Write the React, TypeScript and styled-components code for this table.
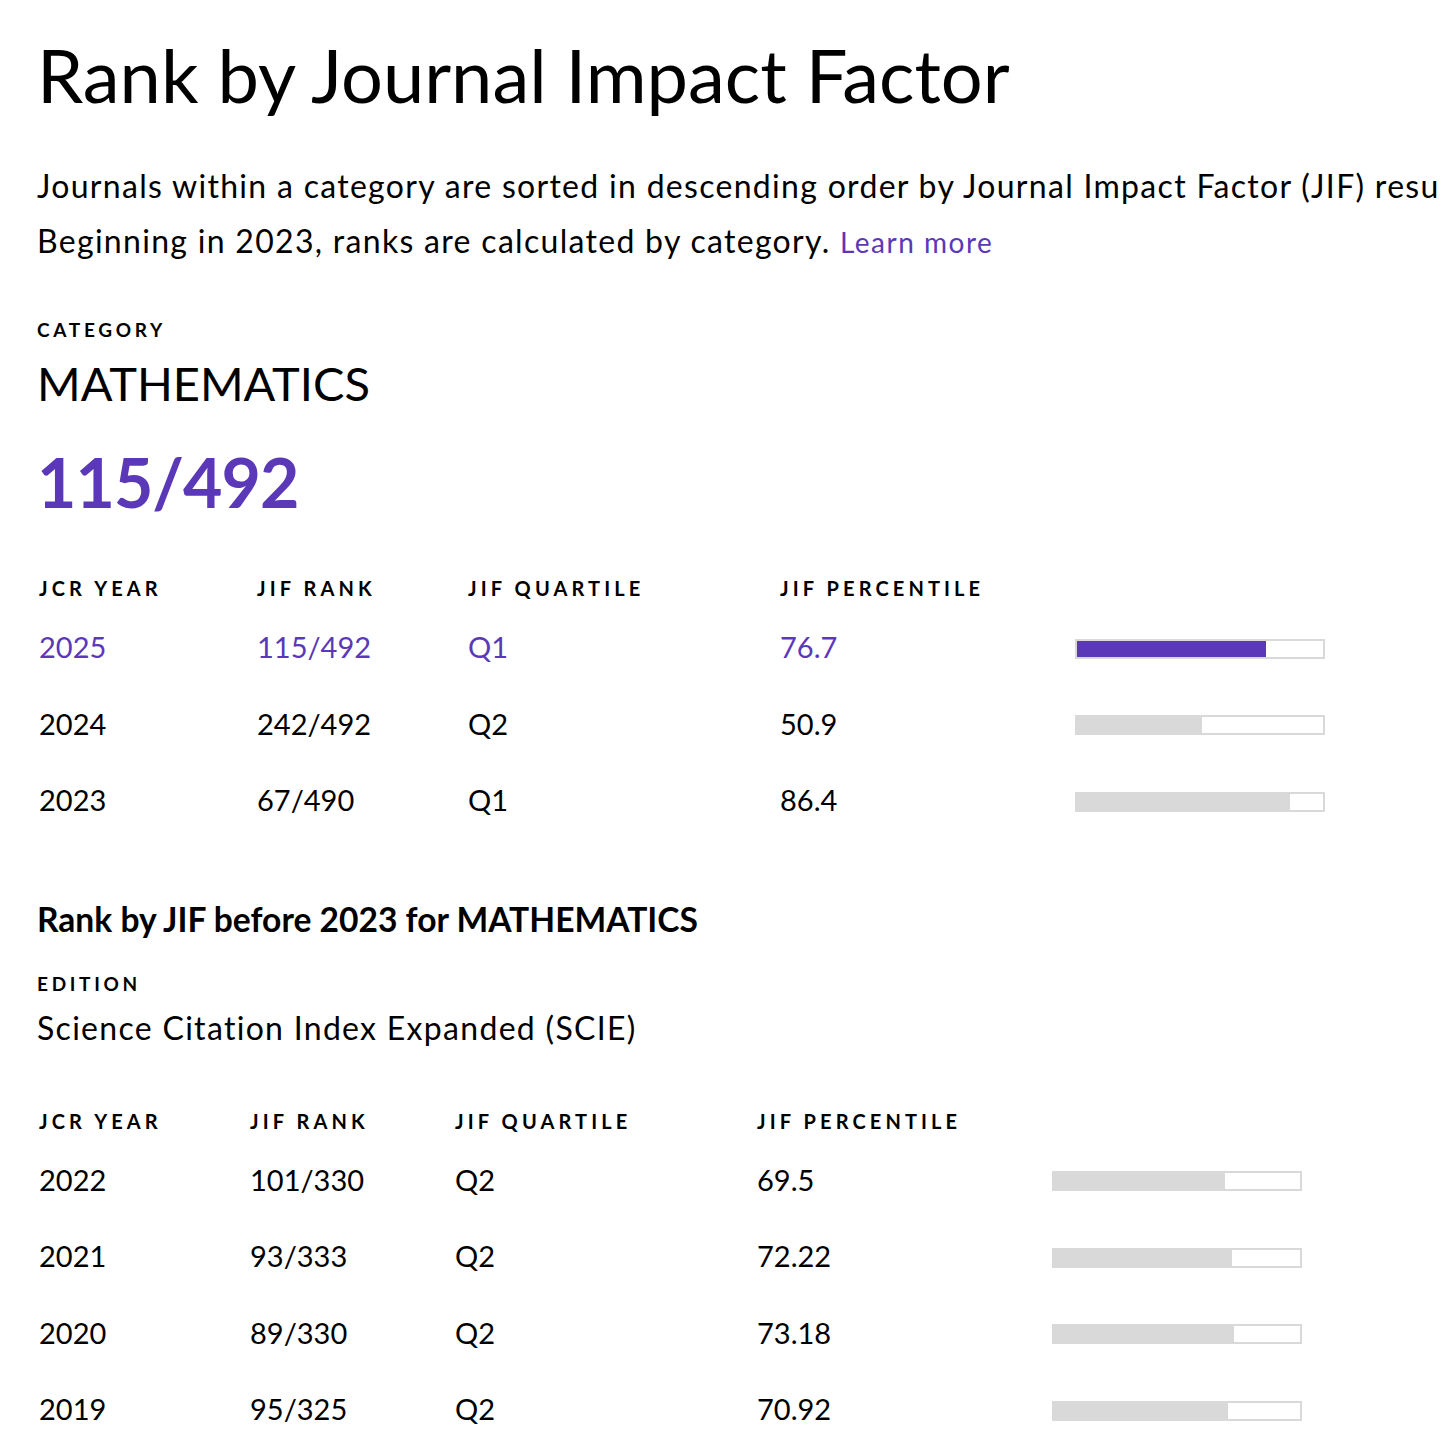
import styled, { createGlobalStyle } from "styled-components";

const GlobalStyle = createGlobalStyle`
  html, body {
    margin: 0;
    padding: 0;
    background: #ffffff;
    overflow-x: hidden;
  }
  body {
    font-family: Lato, "Liberation Sans", sans-serif;
    color: #000000;
  }
`;

const purple = "#5a38b8";
const grey = "#d9d9d9";

const Page = styled.div`
  padding: 35px 0 0 37px;
  overflow: hidden;
`;

const Title = styled.h1`
  margin: 0;
  font-size: 74px;
  line-height: 80px;
  font-weight: 400;
  white-space: nowrap;
`;

const Intro = styled.div`
  margin-top: 43px;
  font-size: 32px;
  line-height: 55px;
  letter-spacing: 1.3px;
`;

const IntroLine = styled.div`
  white-space: nowrap;
`;

const LearnMore = styled.a`
  color: ${purple};
  font-size: 28px;
  letter-spacing: 1.5px;
  text-decoration: none;
`;

const Label = styled.div<{ $top: number }>`
  margin-top: ${({ $top }) => $top}px;
  font-size: 19px;
  line-height: 24px;
  font-weight: 700;
  letter-spacing: 3.7px;
  text-transform: uppercase;
`;

const Category = styled.div`
  margin-top: 13px;
  font-size: 47px;
  line-height: 56px;
`;

const BigRank = styled.div`
  margin-top: 33px;
  font-size: 68px;
  line-height: 76px;
  font-weight: 700;
  letter-spacing: -1px;
  color: ${purple};
`;

const Table = styled.div<{ $top: number; $cols: string }>`
  margin-top: ${({ $top }) => $top}px;
  padding-left: 2px;
  display: grid;
  grid-template-columns: ${({ $cols }) => $cols};
`;

const HeadCell = styled.div`
  height: 33px;
  font-size: 20px;
  line-height: 24px;
  font-weight: 700;
  letter-spacing: 4.1px;
  white-space: nowrap;
`;

const Cell = styled.div<{ $active?: boolean }>`
  height: 76.5px;
  display: flex;
  align-items: center;
  font-size: 29px;
  line-height: 76.5px;
  color: ${({ $active }) => ($active ? purple : "#000000")};
  white-space: nowrap;
`;

const Track = styled.div`
  width: 250px;
  height: 20px;
  box-sizing: border-box;
  border: 2px solid ${grey};
  background: #ffffff;
  margin-top: 3px;
`;

const Fill = styled.div<{ $active?: boolean }>`
  height: 100%;
  background: ${({ $active }) => ($active ? purple : grey)};
`;

const SubHeading = styled.h2`
  margin: 60px 0 0;
  font-size: 33.6px;
  line-height: 40px;
  font-weight: 700;
`;

const Edition = styled.div`
  margin-top: 12px;
  font-size: 32px;
  line-height: 40px;
  letter-spacing: 1.3px;
`;

type Row = { year: string; rank: string; quartile: string; percentile: string; active?: boolean };

const current: Row[] = [
  { year: "2025", rank: "115/492", quartile: "Q1", percentile: "76.7", active: true },
  { year: "2024", rank: "242/492", quartile: "Q2", percentile: "50.9" },
  { year: "2023", rank: "67/490", quartile: "Q1", percentile: "86.4" },
];

const before: Row[] = [
  { year: "2022", rank: "101/330", quartile: "Q2", percentile: "69.5" },
  { year: "2021", rank: "93/333", quartile: "Q2", percentile: "72.22" },
  { year: "2020", rank: "89/330", quartile: "Q2", percentile: "73.18" },
  { year: "2019", rank: "95/325", quartile: "Q2", percentile: "70.92" },
];

const RankTable = ({ rows, cols, top }: { rows: Row[]; cols: string; top: number }) => (
  <Table $top={top} $cols={cols}>
    <HeadCell>JCR YEAR</HeadCell>
    <HeadCell>JIF RANK</HeadCell>
    <HeadCell>JIF QUARTILE</HeadCell>
    <HeadCell>JIF PERCENTILE</HeadCell>
    <HeadCell />
    {rows.map((r) => [
      <Cell key={r.year + "y"} $active={r.active}>{r.year}</Cell>,
      <Cell key={r.year + "r"} $active={r.active}>{r.rank}</Cell>,
      <Cell key={r.year + "q"} $active={r.active}>{r.quartile}</Cell>,
      <Cell key={r.year + "p"} $active={r.active}>{r.percentile}</Cell>,
      <Cell key={r.year + "b"}>
        <Track>
          <Fill $active={r.active} style={{ width: `${parseFloat(r.percentile)}%` }} />
        </Track>
      </Cell>,
    ])}
  </Table>
);

const App = () => {
  return (
    <Page>
      <GlobalStyle />
      <Title>Rank by Journal Impact Factor</Title>
      <Intro>
        <IntroLine>
          Journals within a category are sorted in descending order by Journal Impact Factor (JIF) resulting in
          the Category Ranking below.
        </IntroLine>
        <IntroLine>
          Beginning in 2023, ranks are calculated by category. <LearnMore href="#">Learn more</LearnMore>
        </IntroLine>
      </Intro>

      <Label $top={48}>Category</Label>
      <Category>MATHEMATICS</Category>
      <BigRank>115/492</BigRank>

      <RankTable rows={current} top={56} cols="218px 211px 312px 295px 250px" />

      <SubHeading>Rank by JIF before 2023 for MATHEMATICS</SubHeading>
      <Label $top={33}>Edition</Label>
      <Edition>Science Citation Index Expanded (SCIE)</Edition>

      <RankTable rows={before} top={61} cols="211px 205px 302px 295px 250px" />
    </Page>
  );
};

export default App;
